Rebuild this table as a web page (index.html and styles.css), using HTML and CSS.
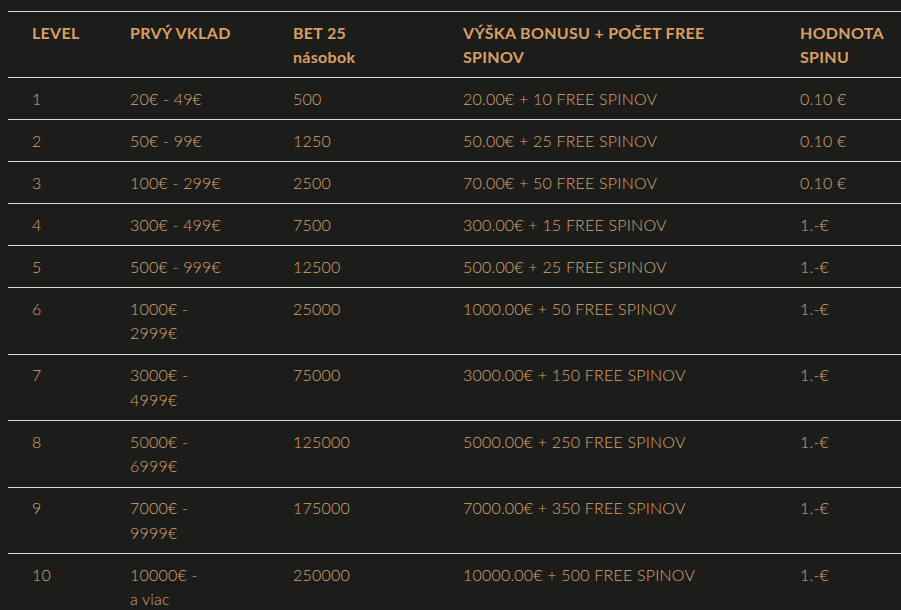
FILE: index.html
```html
<!DOCTYPE html>
<html lang="sk">
<head>
<meta charset="utf-8">
<title>Bonusové levely</title>
<link rel="stylesheet" href="styles.css">
</head>
<body>
<table class="bonus-table">
  <colgroup>
    <col class="c-level">
    <col class="c-deposit">
    <col class="c-bet">
    <col class="c-bonus">
    <col class="c-value">
  </colgroup>
  <thead>
    <tr>
      <th>LEVEL</th>
      <th>PRVÝ VKLAD</th>
      <th>BET 25 násobok</th>
      <th>VÝŠKA BONUSU + POČET FREE SPINOV</th>
      <th>HODNOTA SPINU</th>
    </tr>
  </thead>
  <tbody>
    <tr><td>1</td><td>20€ - 49€</td><td>500</td><td>20.00€ + 10 FREE SPINOV</td><td>0.10 €</td></tr>
    <tr><td>2</td><td>50€ - 99€</td><td>1250</td><td>50.00€ + 25 FREE SPINOV</td><td>0.10 €</td></tr>
    <tr><td>3</td><td>100€ - 299€</td><td>2500</td><td>70.00€ + 50 FREE SPINOV</td><td>0.10 €</td></tr>
    <tr><td>4</td><td>300€ - 499€</td><td>7500</td><td>300.00€ + 15 FREE SPINOV</td><td>1.-€</td></tr>
    <tr><td>5</td><td>500€ - 999€</td><td>12500</td><td>500.00€ + 25 FREE SPINOV</td><td>1.-€</td></tr>
    <tr><td>6</td><td>1000€ - 2999€</td><td>25000</td><td>1000.00€ + 50 FREE SPINOV</td><td>1.-€</td></tr>
    <tr><td>7</td><td>3000€ - 4999€</td><td>75000</td><td>3000.00€ + 150 FREE SPINOV</td><td>1.-€</td></tr>
    <tr><td>8</td><td>5000€ - 6999€</td><td>125000</td><td>5000.00€ + 250 FREE SPINOV</td><td>1.-€</td></tr>
    <tr><td>9</td><td>7000€ - 9999€</td><td>175000</td><td>7000.00€ + 350 FREE SPINOV</td><td>1.-€</td></tr>
    <tr><td>10</td><td>10000€ - a&nbsp;viac</td><td>250000</td><td>10000.00€ + 500 FREE SPINOV</td><td>1.-€</td></tr>
  </tbody>
</table>
</body>
</html>
```
FILE: styles.css
```css
html {
  overflow: hidden;
  background: #1c1c1a;
}
body {
  margin: 0;
  padding: 11px 0 0 8px;
  background: #1c1c1a;
  font-family: "Lato", "Open Sans", sans-serif;
  font-size: 16px;
  line-height: 24px;
  color: #d4a26f;
}
.bonus-table {
  width: 920px;
  table-layout: fixed;
  border-collapse: collapse;
  border-spacing: 0;
}
.c-level { width: 98px; }
.c-deposit { width: 163px; }
.c-bet { width: 170px; }
.c-bonus { width: 337px; }
.c-value { width: 152px; }
.bonus-table th,
.bonus-table td {
  border-top: 1px solid #dcdcd6;
  text-align: left;
  vertical-align: top;
}
.bonus-table th {
  padding: 9px 24px 8px;
  font-weight: 700;
  letter-spacing: 0.3px;
  color: #d99f65;
}
.bonus-table td {
  padding: 8.5px 24px 8px;
  line-height: 24.5px;
  font-weight: 300;
  color: #d6a672;
  letter-spacing: 0.2px;
}
.bonus-table td:nth-child(2) {
  padding-right: 40px;
}
.bonus-table th:nth-child(3) {
  padding-right: 60px;
}
```
